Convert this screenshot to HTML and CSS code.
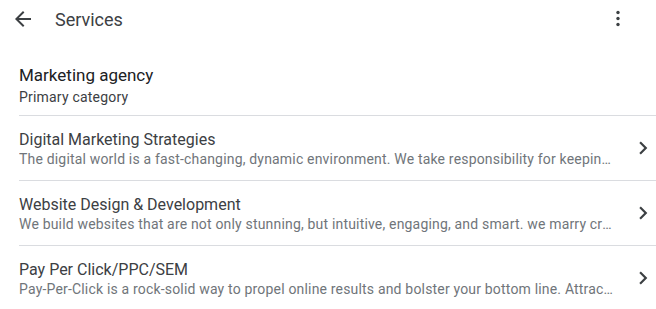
FILE: index.html
```html
<!DOCTYPE html>
<html>
<head>
<meta charset="utf-8">
<link rel="stylesheet" href="styles.css">
</head>
<body>
<div class="page">
  <header class="topbar">
    <button class="icon-btn back" aria-label="Back">
      <svg width="24" height="24" viewBox="0 0 24 24"><path d="M20 11H7.83l5.59-5.59L12 4l-8 8 8 8 1.41-1.41L7.83 13H20v-2z" fill="#3c4043"/></svg>
    </button>
    <h1 class="title">Services</h1>
    <button class="icon-btn more" aria-label="More">
      <svg width="24" height="24" viewBox="0 0 24 24"><circle cx="12" cy="5.5" r="1.7" fill="#3c4043"/><circle cx="12" cy="11.5" r="1.7" fill="#3c4043"/><circle cx="12" cy="17.5" r="1.7" fill="#3c4043"/></svg>
    </button>
  </header>

  <section class="category">
    <div class="cat-name">Marketing agency</div>
    <div class="cat-label">Primary category</div>
  </section>

  <ul class="services">
    <li class="service">
      <div class="service-text">
        <div class="service-name">Digital Marketing Strategies</div>
        <div class="service-desc">The digital world is a fast-changing, dynamic environment. We take responsibility for keeping your brand ahead of the curve.</div>
      </div>
      <svg class="chev" width="24" height="24" viewBox="0 0 24 24"><path d="M10 6 8.59 7.41 13.17 12l-4.58 4.59L10 18l6-6z" fill="#3c4043"/></svg>
    </li>
    <li class="service">
      <div class="service-text">
        <div class="service-name">Website Design &amp; Development</div>
        <div class="service-desc">We build websites that are not only stunning, but intuitive, engaging, and smart. we marry creativity with technology.</div>
      </div>
      <svg class="chev" width="24" height="24" viewBox="0 0 24 24"><path d="M10 6 8.59 7.41 13.17 12l-4.58 4.59L10 18l6-6z" fill="#3c4043"/></svg>
    </li>
    <li class="service">
      <div class="service-text">
        <div class="service-name">Pay Per Click/PPC/SEM</div>
        <div class="service-desc">Pay-Per-Click is a rock-solid way to propel online results and bolster your bottom line. Attract more customers today.</div>
      </div>
      <svg class="chev" width="24" height="24" viewBox="0 0 24 24"><path d="M10 6 8.59 7.41 13.17 12l-4.58 4.59L10 18l6-6z" fill="#3c4043"/></svg>
    </li>
  </ul>
</div>
</body>
</html>
```
FILE: styles.css
```css
* { box-sizing: border-box; }
html, body { margin: 0; padding: 0; background: #fff; }
body { font-family: Roboto, "Liberation Sans", Arial, sans-serif; color: #3c4043; }

.page { width: 656px; }

.topbar {
  display: flex;
  align-items: center;
  height: 38px;
  padding: 0 0 0 11px;
}
.icon-btn {
  border: 0;
  background: none;
  padding: 0;
  width: 24px;
  height: 24px;
  display: flex;
  align-items: center;
  justify-content: center;
  cursor: pointer;
}
.title {
  margin: 0 0 0 20px;
  font-size: 18px;
  font-weight: 400;
  color: #3c4043;
  flex: 1;
}
.more { margin-right: 26px; }

.category {
  padding: 25px 19px 8px 19px;
}
.cat-name {
  font-size: 17px;
  line-height: 24px;
  font-weight: 400;
  color: #202124;
}
.cat-label {
  font-size: 14px;
  line-height: 20px;
  letter-spacing: 0.2px;
  color: #3c4043;
}

.services {
  list-style: none;
  margin: 0 0 0 19px;
  padding: 0;
}
.service {
  display: flex;
  align-items: center;
  height: 65px;
  border-top: 1px solid #dadce0;
}
.service-text {
  flex: 1;
  min-width: 0;
  padding: 4px 14px 0 0;
}
.service-name {
  font-size: 16px;
  line-height: 18px;
  color: #3c4043;
}
.service-desc {
  font-size: 14px;
  line-height: 20px;
  letter-spacing: 0.18px;
  color: #70757a;
  white-space: nowrap;
  overflow: hidden;
  text-overflow: ellipsis;
}
.chev { flex: none; width: 26px; height: 26px; }
```
